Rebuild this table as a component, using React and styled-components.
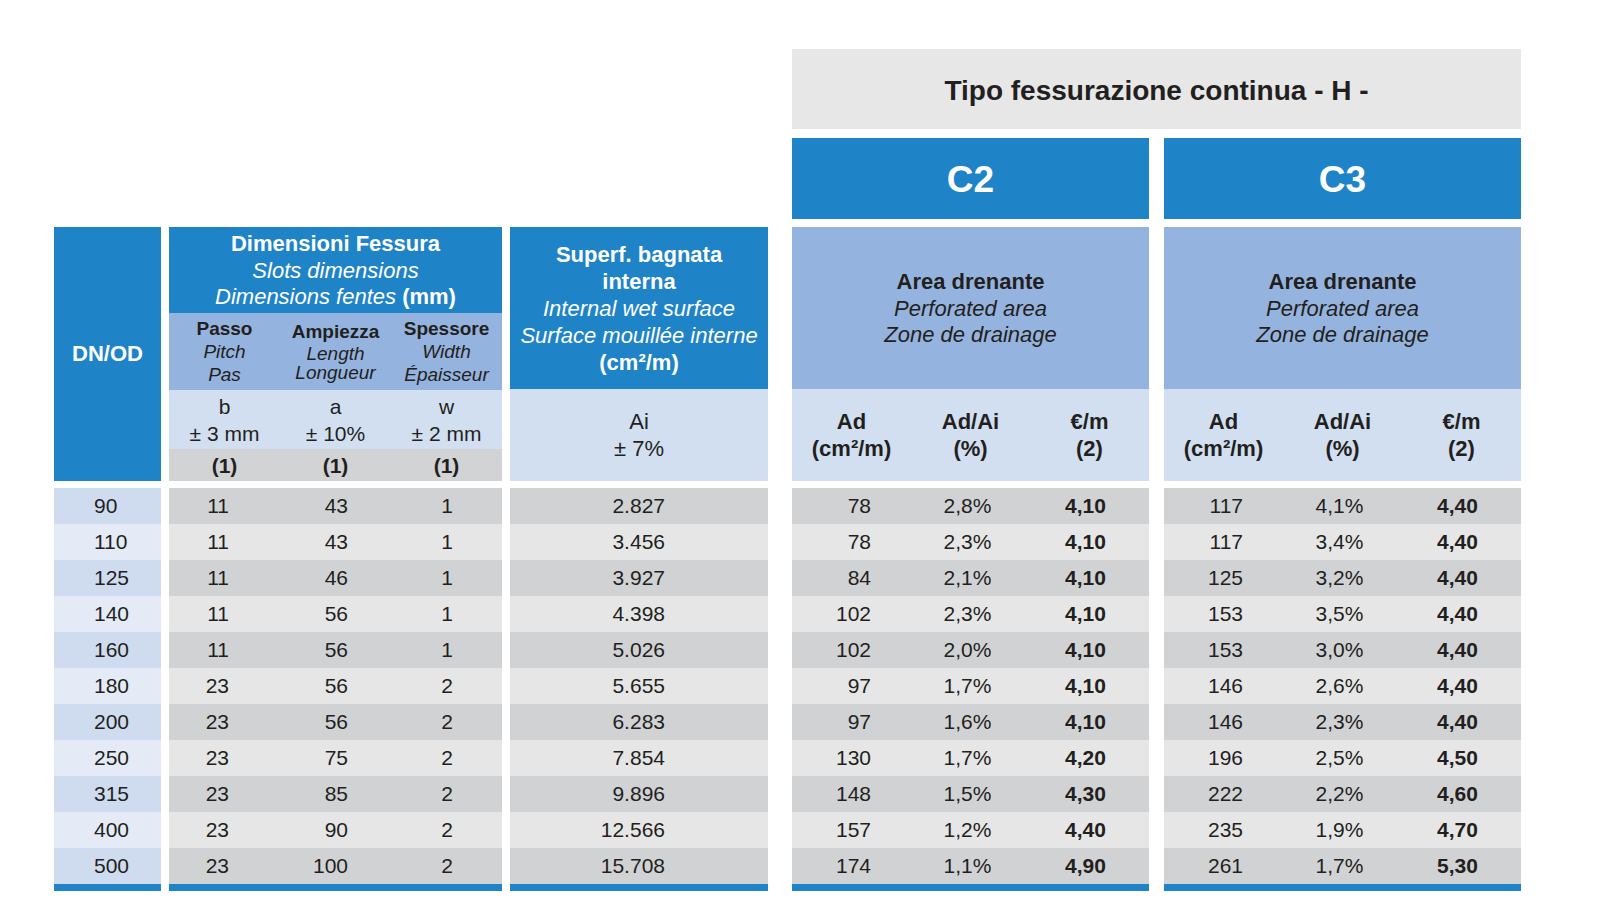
import React from "react";
import styled, { createGlobalStyle } from "styled-components";

const BLUE = "#1f83c7";
const LIGHT_BLUE = "#94b4df";
const PALE = "#d2dff1";
const INK = "#231f20";

const GlobalStyle = createGlobalStyle`
  html, body {
    margin: 0;
    padding: 0;
    background: #ffffff;
  }
  body {
    font-family: "Liberation Sans", Arial, sans-serif;
    color: ${INK};
  }
`;

const Page = styled.div`
  width: 1600px;
  height: 915px;
  box-sizing: border-box;
  padding: 49px 0 0 54px;
`;

const Table = styled.div`
  display: flex;
  align-items: flex-end;
`;

const Group = styled.div`
  display: flex;
  flex-direction: column;
  width: ${(p) => p.$w}px;
  margin-right: ${(p) => p.$mr || 0}px;
`;

const RightGroup = styled.div`
  display: flex;
  flex-direction: column;
  width: 729px;
`;

const TipoBox = styled.div`
  height: 80px;
  box-sizing: border-box;
  padding-top: 4px;
  background: #e7e7e7;
  display: flex;
  align-items: center;
  justify-content: center;
  font-weight: bold;
  font-size: 28px;
  margin-bottom: 9px;
`;

const SeriesRow = styled.div`
  display: flex;
  gap: 15px;
`;

const SeriesTitle = styled.div`
  height: 81px;
  box-sizing: border-box;
  padding-top: 2px;
  background: ${BLUE};
  color: #ffffff;
  font-weight: bold;
  font-size: 37px;
  display: flex;
  align-items: center;
  justify-content: center;
  margin-bottom: 8px;
`;

const Head = styled.div`
  height: ${(p) => p.$h}px;
  box-sizing: border-box;
  padding-top: ${(p) => p.$pt || 0}px;
  background: ${(p) => p.$bg};
  color: ${(p) => (p.$light ? "#ffffff" : INK)};
  display: flex;
  flex-direction: column;
  align-items: center;
  justify-content: center;
  text-align: center;
  font-size: 22px;
  line-height: ${(p) => p.$lh || 26.5}px;
`;

const Bold = styled.span`
  font-weight: bold;
  font-style: normal;
`;

const Ital = styled.span`
  font-style: italic;
`;

const SubGrid = styled.div`
  height: ${(p) => p.$h}px;
  background: ${(p) => p.$bg};
  display: grid;
  grid-template-columns: repeat(3, 1fr);
  align-items: center;
  text-align: center;
  font-size: ${(p) => p.$fs || 21}px;
  line-height: ${(p) => p.$lh || 23}px;
  font-weight: ${(p) => (p.$bold ? "bold" : "normal")};
`;

const SubCell = styled.div`
  display: flex;
  flex-direction: column;
  align-items: center;
  line-height: ${(p) => p.$lh || "inherit"};
  padding-top: ${(p) => p.$pt || 0}px;
`;

const SubLabel = styled.span`
  font-size: 19px;
  font-weight: ${(p) => (p.$bold ? "bold" : "normal")};
  font-style: ${(p) => (p.$italic ? "italic" : "normal")};
  margin-bottom: ${(p) => p.$mb || 0}px;
`;

const Rows = styled.div`
  margin-top: 7px;
  display: flex;
  flex-direction: column;
`;

const Row = styled.div`
  height: 36px;
  display: grid;
  grid-template-columns: ${(p) => p.$cols || "1fr"};
  align-items: center;
  font-size: 21px;
  background: ${(p) =>
    p.$dn
      ? p.$odd
        ? "#e4ebf7"
        : "#cfdcef"
      : p.$odd
      ? "#e6e6e7"
      : "#d1d2d4"};
`;

const Cell = styled.div`
  text-align: ${(p) => p.$align || "center"};
  padding-left: ${(p) => p.$pl || 0}px;
  padding-right: ${(p) => p.$pr || 0}px;
  font-weight: ${(p) => (p.$bold ? "bold" : "normal")};
`;

const BottomBar = styled.div`
  height: 7px;
  background: ${BLUE};
`;

const rows = [
  [90, 11, 43, 1, "2.827", 78, "2,8%", "4,10", 117, "4,1%", "4,40"],
  [110, 11, 43, 1, "3.456", 78, "2,3%", "4,10", 117, "3,4%", "4,40"],
  [125, 11, 46, 1, "3.927", 84, "2,1%", "4,10", 125, "3,2%", "4,40"],
  [140, 11, 56, 1, "4.398", 102, "2,3%", "4,10", 153, "3,5%", "4,40"],
  [160, 11, 56, 1, "5.026", 102, "2,0%", "4,10", 153, "3,0%", "4,40"],
  [180, 23, 56, 2, "5.655", 97, "1,7%", "4,10", 146, "2,6%", "4,40"],
  [200, 23, 56, 2, "6.283", 97, "1,6%", "4,10", 146, "2,3%", "4,40"],
  [250, 23, 75, 2, "7.854", 130, "1,7%", "4,20", 196, "2,5%", "4,50"],
  [315, 23, 85, 2, "9.896", 148, "1,5%", "4,30", 222, "2,2%", "4,60"],
  [400, 23, 90, 2, "12.566", 157, "1,2%", "4,40", 235, "1,9%", "4,70"],
  [500, 23, 100, 2, "15.708", 174, "1,1%", "4,90", 261, "1,7%", "5,30"],
];

function Series({ name, offset }) {
  return (
    <Group $w={357}>
      <SeriesTitle>{name}</SeriesTitle>
      <Head $h={162} $bg={LIGHT_BLUE} $pt={2}>
        <Bold>Area drenante</Bold>
        <Ital>Perforated area</Ital>
        <Ital>Zone de drainage</Ital>
      </Head>
      <SubGrid $h={92} $bg={PALE} $bold $fs={22} $lh={27}>
        <SubCell>
          <span>Ad</span>
          <span>(cm²/m)</span>
        </SubCell>
        <SubCell>
          <span>Ad/Ai</span>
          <span>(%)</span>
        </SubCell>
        <SubCell>
          <span>€/m</span>
          <span>(2)</span>
        </SubCell>
      </SubGrid>
      <Rows>
        {rows.map((r, i) => (
          <Row key={r[0]} $odd={i % 2 === 1} $cols="repeat(3, 1fr)">
            <Cell $align="right" $pr={40}>
              {r[offset]}
            </Cell>
            <Cell $pr={6}>{r[offset + 1]}</Cell>
            <Cell $bold $pr={8}>
              {r[offset + 2]}
            </Cell>
          </Row>
        ))}
      </Rows>
      <BottomBar />
    </Group>
  );
}

export default function App() {
  return (
    <Page>
      <GlobalStyle />
      <Table>
        {/* DN/OD */}
        <Group $w={107} $mr={8}>
          <Head $h={254} $bg={BLUE} $light>
            <Bold>DN/OD</Bold>
          </Head>
          <Rows>
            {rows.map((r, i) => (
              <Row key={r[0]} $dn $odd={i % 2 === 1}>
                <Cell $align="left" $pl={40}>
                  {r[0]}
                </Cell>
              </Row>
            ))}
          </Rows>
          <BottomBar />
        </Group>

        {/* slot dimensions */}
        <Group $w={333} $mr={8}>
          <Head $h={86} $bg={BLUE} $light $pt={2}>
            <Bold>Dimensioni Fessura</Bold>
            <Ital>Slots dimensions</Ital>
            <span>
              <Ital>Dimensions fentes</Ital> <Bold>(mm)</Bold>
            </span>
          </Head>
          <SubGrid $h={77} $bg={LIGHT_BLUE}>
            <SubCell>
              <SubLabel $bold>Passo</SubLabel>
              <SubLabel $italic>Pitch</SubLabel>
              <SubLabel $italic>Pas</SubLabel>
            </SubCell>
            <SubCell $lh="19px">
              <SubLabel $bold $mb={3}>
                Ampiezza
              </SubLabel>
              <SubLabel $italic>Length</SubLabel>
              <SubLabel $italic>Longueur</SubLabel>
            </SubCell>
            <SubCell>
              <SubLabel $bold>Spessore</SubLabel>
              <SubLabel $italic>Width</SubLabel>
              <SubLabel $italic>Épaisseur</SubLabel>
            </SubCell>
          </SubGrid>
          <SubGrid $h={59} $bg={PALE} $fs={21} $lh={27}>
            <SubCell>
              <span>b</span>
              <span>± 3 mm</span>
            </SubCell>
            <SubCell>
              <span>a</span>
              <span>± 10%</span>
            </SubCell>
            <SubCell>
              <span>w</span>
              <span>± 2 mm</span>
            </SubCell>
          </SubGrid>
          <SubGrid $h={32} $bg="#d1d3d4" $bold>
            <SubCell>(1)</SubCell>
            <SubCell>(1)</SubCell>
            <SubCell>(1)</SubCell>
          </SubGrid>
          <Rows>
            {rows.map((r, i) => (
              <Row key={r[0]} $odd={i % 2 === 1} $cols="repeat(3, 1fr)">
                <Cell $align="right" $pr={51}>
                  {r[1]}
                </Cell>
                <Cell $align="right" $pr={43}>
                  {r[2]}
                </Cell>
                <Cell $align="right" $pr={49}>
                  {r[3]}
                </Cell>
              </Row>
            ))}
          </Rows>
          <BottomBar />
        </Group>

        {/* internal wet surface */}
        <Group $w={258} $mr={24}>
          <Head $h={162} $bg={BLUE} $light $lh={27}>
            <Bold>Superf. bagnata</Bold>
            <Bold>interna</Bold>
            <Ital>Internal wet surface</Ital>
            <Ital>Surface mouillée interne</Ital>
            <Bold>(cm²/m)</Bold>
          </Head>
          <Head $h={92} $bg={PALE} $lh={27}>
            <span>Ai</span>
            <span>± 7%</span>
          </Head>
          <Rows>
            {rows.map((r, i) => (
              <Row key={r[0]} $odd={i % 2 === 1}>
                <Cell $align="right" $pr={103}>
                  {r[4]}
                </Cell>
              </Row>
            ))}
          </Rows>
          <BottomBar />
        </Group>

        {/* continuous slot type */}
        <RightGroup>
          <TipoBox>Tipo fessurazione continua - H -</TipoBox>
          <SeriesRow>
            <Series name="C2" offset={5} />
            <Series name="C3" offset={8} />
          </SeriesRow>
        </RightGroup>
      </Table>
    </Page>
  );
}
